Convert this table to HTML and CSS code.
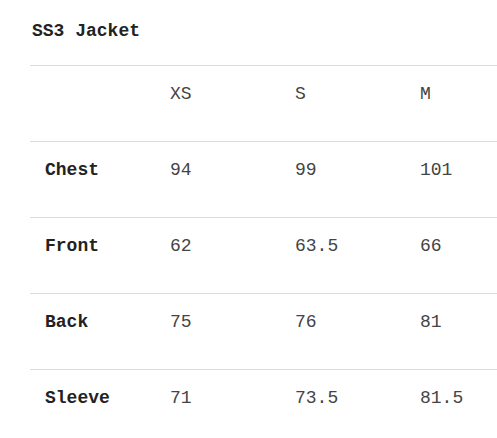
FILE: index.html
```html
<!DOCTYPE html>
<html>
<head>
<meta charset="utf-8">
<link rel="stylesheet" href="styles.css">
</head>
<body>
<div class="page">
  <h1 class="title">SS3 Jacket</h1>
  <table class="sizes">
    <tr class="head"><th></th><td>XS</td><td>S</td><td>M</td></tr>
    <tr><th>Chest</th><td>94</td><td>99</td><td>101</td></tr>
    <tr><th>Front</th><td>62</td><td>63.5</td><td>66</td></tr>
    <tr><th>Back</th><td>75</td><td>76</td><td>81</td></tr>
    <tr><th>Sleeve</th><td>71</td><td>73.5</td><td>81.5</td></tr>
  </table>
</div>
</body>
</html>
```
FILE: styles.css
```css
html, body { margin: 0; padding: 0; background: #fff; }
body { overflow: hidden; font-family: "Liberation Mono", "Courier New", monospace; font-size: 18px; color: #333; }
.page { padding: 20px 0 0 30px; }
.title { margin: 0 0 23px 2px; font-size: 18px; line-height: 22px; font-weight: bold; color: #222; }
.sizes { border-collapse: collapse; width: 467px; table-layout: fixed; }
.sizes tr { border-top: 1px solid #ddd; }
.sizes th, .sizes td { padding: 17px 0 36px 15px; line-height: 22px; text-align: left; vertical-align: top; width: 110px; }
.sizes td:last-child { width: auto; }
.sizes th { font-weight: bold; color: #222; }
.sizes td { font-weight: normal; color: #444; }
```
